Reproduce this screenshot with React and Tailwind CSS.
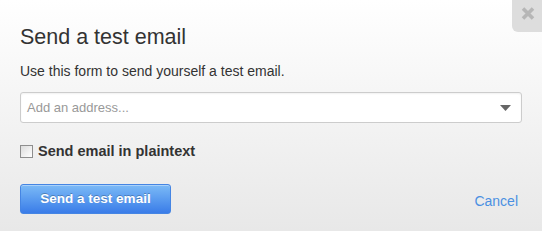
import React from "react";

export default function App() {
  return (
    <div
      className="relative w-[542px] h-[231px] overflow-hidden bg-gradient-to-b from-[#ffffff] to-[#e8e8e8] px-[20px] pt-[25px]"
      style={{ fontFamily: '"Liberation Sans", Arial, sans-serif' }}
    >
      <div className="absolute right-0 top-0 w-[30px] h-[32px] rounded-bl-[6px] bg-[#dddddd] flex items-center justify-center">
        <svg width="14" height="13" viewBox="0 0 14 13" className="mt-[-6px] ml-[2px]">
          <path d="M2 1.5 L12 11.5 M12 1.5 L2 11.5" stroke="#b6b6b6" strokeWidth="3.6" strokeLinecap="butt" />
        </svg>
      </div>

      <h1 className="text-[21.5px] leading-[24px] text-[#333333] font-normal">Send a test email</h1>
      <p className="mt-[14px] text-[14px] leading-[16px] text-[#333333]">
        Use this form to send yourself a test email.
      </p>

      <div className="mt-[13px] h-[31px] w-[502px] rounded-[3px] border border-[#cccccc] bg-white shadow-[inset_0_1px_2px_rgba(0,0,0,0.06)] flex items-center pl-[6px] pr-[10px]">
        <span className="flex-1 text-[13px] text-[#999999]">Add an address...</span>
        <svg width="11" height="6" viewBox="0 0 11 6">
          <path d="M0 0 H11 L5.5 6 Z" fill="#666666" />
        </svg>
      </div>

      <div className="mt-[20px] flex items-center h-[16px]">
        <div className="w-[13px] h-[13px] border border-[#8e8e8e] bg-gradient-to-br from-[#dcdcdc] to-[#ffffff]" />
        <span className="ml-[5px] text-[14.5px] leading-[16px] font-bold text-[#333333]">Send email in plaintext</span>
      </div>

      <div className="mt-[25px] flex items-center w-[498px]">
        <button className="w-[151px] h-[30px] rounded-[3px] border border-[#4585e3] bg-gradient-to-b from-[#7cbaf6] to-[#3a7ce8] text-white font-bold text-[13.5px] [text-shadow:0_-1px_0_rgba(0,0,0,0.25)] shadow-[inset_0_1px_0_rgba(255,255,255,0.35)]">
          Send a test email
        </button>
        <div className="flex-1" />
        <span className="pt-[4px] text-[14px] leading-[16px] text-[#4a90e2]">Cancel</span>
      </div>
    </div>
  );
}
